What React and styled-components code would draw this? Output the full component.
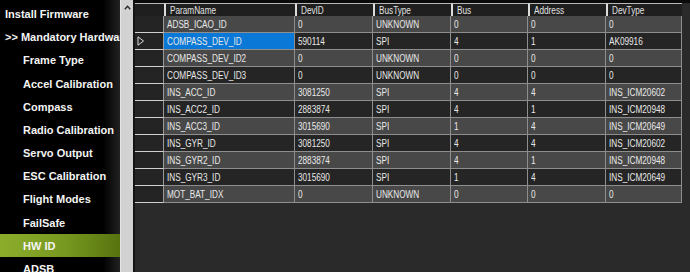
import styled, { createGlobalStyle } from "styled-components";

const GlobalStyle = createGlobalStyle`
   html, body {
      margin: 0;
      padding: 0;
      background: #000000;
   }
   body {
      width: 690px;
      height: 272px;
      overflow: hidden;
      font-family: "Liberation Sans", Arial, sans-serif;
   }
`;

const MENU = [
   {label: "Install Firmware"},
   {label: ">> Mandatory Hardware"},
   {label: "Frame Type", sub: true},
   {label: "Accel Calibration", sub: true},
   {label: "Compass", sub: true},
   {label: "Radio Calibration", sub: true},
   {label: "Servo Output", sub: true},
   {label: "ESC Calibration", sub: true},
   {label: "Flight Modes", sub: true},
   {label: "FailSafe", sub: true},
   {label: "HW ID", sub: true, active: true},
   {label: "ADSB", sub: true},
];

const COLUMNS = ["ParamName", "DevID", "BusType", "Bus", "Address", "DevType"];

const ROWS = [
   ["ADSB_ICAO_ID", "0", "UNKNOWN", "0", "0", "0"],
   ["COMPASS_DEV_ID", "590114", "SPI", "4", "1", "AK09916"],
   ["COMPASS_DEV_ID2", "0", "UNKNOWN", "0", "0", "0"],
   ["COMPASS_DEV_ID3", "0", "UNKNOWN", "0", "0", "0"],
   ["INS_ACC_ID", "3081250", "SPI", "4", "4", "INS_ICM20602"],
   ["INS_ACC2_ID", "2883874", "SPI", "4", "1", "INS_ICM20948"],
   ["INS_ACC3_ID", "3015690", "SPI", "1", "4", "INS_ICM20649"],
   ["INS_GYR_ID", "3081250", "SPI", "4", "4", "INS_ICM20602"],
   ["INS_GYR2_ID", "2883874", "SPI", "4", "1", "INS_ICM20948"],
   ["INS_GYR3_ID", "3015690", "SPI", "1", "4", "INS_ICM20649"],
   ["MOT_BAT_IDX", "0", "UNKNOWN", "0", "0", "0"],
];

const SELECTED_ROW = 1;

const Screen = styled.div`
   display: flex;
   width: 690px;
   height: 272px;
   overflow: hidden;
   background: #000000;
`;

const Sidebar = styled.nav`
   flex: none;
   width: 120px;
   display: flex;
   flex-direction: column;
   padding-top: 2.4px;
   box-sizing: border-box;
   overflow: hidden;
   background: linear-gradient(to right, #000000 0, #000000 86%, #222222 100%);
`;

const MenuItem = styled.div`
   flex: none;
   height: 23.2px;
   display: flex;
   align-items: center;
   padding-left: ${p => p.$sub ? 23 : 5}px;
   white-space: nowrap;
   font: bold 11px "Liberation Sans", Arial, sans-serif;
   color: #f4f4f4;
   background: ${p => p.$active
      ? "linear-gradient(to right, #8cad2b 0, #77981f 55%, #56730f 100%)"
      : "transparent"};
`;

const ScrollTrack = styled.div`
   flex: none;
   width: 13px;
   box-sizing: border-box;
   background: #d2d2d2;
   border-left: 1px solid #e4e4e4;
   display: flex;
   flex-direction: column;
`;

const ScrollButton = styled.div`
   height: 17px;
   display: flex;
   align-items: center;
   justify-content: center;
   padding-bottom: 3px;
   box-sizing: border-box;
`;

const GridPanel = styled.div`
   flex: 1;
   min-width: 0;
   background: #2a2a2b;
   border-left: 2px solid #141414;
   border-top: 3px solid #0b0b0b;
`;

const Table = styled.div`
   display: grid;
   grid-template-columns: 29px 131px 78px 78px 77px 78px 76px;
   grid-template-rows: 13px;
   grid-auto-rows: 17px;
   width: max-content;
   font: 10px "Liberation Sans", Arial, sans-serif;
`;

// the grid font is a narrow sans; squeeze Liberation Sans to its width
const NarrowText = styled.span`
   display: inline-block;
   white-space: nowrap;
   transform: scaleX(0.82);
   transform-origin: left center;
`;

const HeaderCorner = styled.div`
   background: #1f1f1f;
   border-top: 1px solid #b8b8b8;
`;

const HeaderCell = styled.div`
   display: flex;
   align-items: center;
   padding-left: 4px;
   box-sizing: border-box;
   background: #1f1f1f;
   color: #e2e2e2;
   border-top: 1px solid #b8b8b8;
   border-left: 2px solid #dcdcdc;
   overflow: hidden;
`;

const RowHeader = styled.div`
   display: flex;
   align-items: center;
   padding-left: 2px;
   box-sizing: border-box;
   background: #242424;
   border-bottom: 1px solid #d0d0d0;
   border-right: 1px solid #9a9a9a;
`;

const Cell = styled.div`
   display: flex;
   align-items: center;
   padding-left: 3px;
   box-sizing: border-box;
   overflow: hidden;
   color: #e8e8e8;
   background: ${p => p.$selected ? "#0a78d7" : p.$alt ? "#484848" : "#252525"};
   border-right: 1px solid #8e8e8e;
   border-bottom: 1px solid #8e8e8e;
`;

const UpArrow = () => (
   <svg width="7" height="5" viewBox="0 0 7 5">
      <polyline points="0.8,4.2 3.5,1.2 6.2,4.2" fill="none" stroke="#2a2a2a" strokeWidth="1.4"/>
   </svg>
);

const RowPointer = () => (
   <svg width="8" height="10" viewBox="0 0 8 10">
      <polygon points="1,0.8 6.5,5 1,9.2" fill="none" stroke="#dcdcdc" strokeWidth="1"/>
   </svg>
);

export default function App() {
   return (
      <Screen>
         <GlobalStyle/>
         <Sidebar>
            {MENU.map(item =>
               <MenuItem key={item.label} $sub={item.sub} $active={item.active}>{item.label}</MenuItem>
            )}
         </Sidebar>
         <ScrollTrack>
            <ScrollButton><UpArrow/></ScrollButton>
         </ScrollTrack>
         <GridPanel>
            <Table>
               <HeaderCorner/>
               {COLUMNS.map(col => <HeaderCell key={col}><NarrowText>{col}</NarrowText></HeaderCell>)}
               {ROWS.map((row, r) => [
                  <RowHeader key={`h${r}`}>{r === SELECTED_ROW && <RowPointer/>}</RowHeader>,
                  ...row.map((value, c) =>
                     <Cell
                        key={`${r}-${c}`}
                        $alt={r % 2 === 0}
                        $selected={r === SELECTED_ROW && c === 0}>
                        <NarrowText>{value}</NarrowText>
                     </Cell>
                  )
               ])}
            </Table>
         </GridPanel>
      </Screen>
   );
}
